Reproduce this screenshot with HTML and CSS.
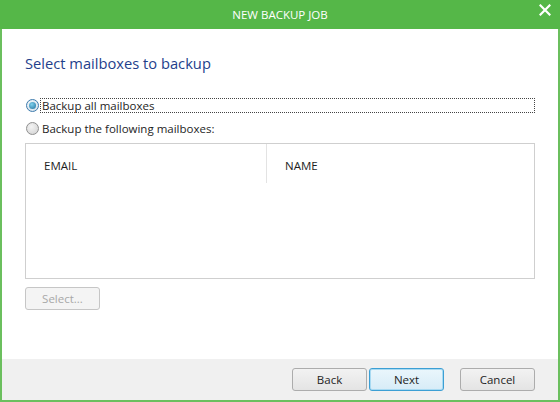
FILE: index.html
```html
<!DOCTYPE html>
<html>
<head>
<meta charset="utf-8">
<link rel="stylesheet" href="styles.css">
</head>
<body>
<div class="window">
  <div class="titlebar">
    <span class="title">NEW BACKUP JOB</span>
    <span class="close">
      <svg width="12" height="12" viewBox="0 0 12 12"><path d="M1.5 1.5 L10.5 10.5 M10.5 1.5 L1.5 10.5" stroke="#fff" stroke-width="2.2" stroke-linecap="square"/></svg>
    </span>
  </div>
  <div class="content">
    <h1 class="heading">Select mailboxes to backup</h1>
    <div class="options">
      <label class="option">
        <span class="radio checked"><span class="dot"></span></span>
        <span class="label focus">Backup all mailboxes</span>
      </label>
      <label class="option">
        <span class="radio"></span>
        <span class="label">Backup the following mailboxes:</span>
      </label>
    </div>
    <div class="grid">
      <div class="grid-head">
        <div class="col col-email">EMAIL</div>
        <div class="col col-name">NAME</div>
      </div>
    </div>
    <div class="select-row">
      <button class="btn disabled">Select...</button>
    </div>
  </div>
  <div class="footer">
    <button class="btn">Back</button>
    <button class="btn default">Next</button>
    <button class="btn cancel">Cancel</button>
  </div>
</div>
</body>
</html>
```

FILE: styles.css
```css
html, body {
  margin: 0;
  padding: 0;
  width: 560px;
  height: 402px;
  overflow: hidden;
  background: #fff;
}
body {
  font-family: "Open Sans", "Noto Sans", sans-serif;
  font-size: 11.5px;
  color: #1e1e1e;
}
.window {
  width: 560px;
  height: 402px;
  box-sizing: border-box;
  border-left: 2px solid #6bbf5e;
  border-right: 2px solid #6bbf5e;
  border-bottom: 2px solid #6bbf5e;
  display: flex;
  flex-direction: column;
}
.titlebar {
  height: 29px;
  margin: 0 -2px;
  background: #55b748;
  color: #fff;
  display: flex;
  align-items: center;
  justify-content: center;
  position: relative;
  flex: none;
}
.title {
  font-size: 11.5px;
}
.close {
  position: absolute;
  right: 9px;
  top: 4px;
  width: 12px;
  height: 12px;
}
.content {
  flex: 1;
  background: #fff;
  padding: 0 23px;
}
.heading {
  margin: 24px 0 0 0;
  font-size: 14.7px;
  font-weight: normal;
  line-height: 20px;
  color: #1f3f8c;
}
.options {
  margin-top: 23px;
  display: flex;
  flex-direction: column;
  gap: 5px;
}
.option {
  display: flex;
  align-items: center;
  height: 18px;
}
.radio {
  width: 11px;
  height: 11px;
  border-radius: 50%;
  border: 1px solid #8f8f8f;
  background: radial-gradient(circle at 40% 35%, #f4f4f4, #d0d0d0);
  margin-left: 1px;
  margin-right: 1px;
  display: flex;
  align-items: center;
  justify-content: center;
  flex: none;
}
.radio.checked {
  border-color: #3d7bad;
  background: radial-gradient(circle at 40% 35%, #f4f8fb, #cfdde8);
}
.dot {
  width: 7px;
  height: 7px;
  border-radius: 50%;
  background: radial-gradient(circle at 40% 35%, #7fd0ec, #1f6f9c);
}
.label {
  line-height: 13px;
  padding: 0 1px;
}
.label.focus {
  flex: 1;
  border: 1px dotted #444;
}
.option + .option .label {
  margin-left: 1px;
}
.grid {
  margin-top: 6px;
  height: 134px;
  border: 1px solid #cfcfcf;
  background: #fff;
}
.grid-head {
  display: flex;
  height: 39px;
}
.col {
  padding-top: 15px;
  padding-left: 18px;
  line-height: 14px;
}
.col-email {
  width: 222px;
  border-right: 1px solid #e3e3e3;
}
.col-name {
  flex: 1;
}
.select-row {
  margin-top: 8px;
  display: flex;
}
.btn {
  font-family: "Open Sans", "Noto Sans", sans-serif;
  font-size: 11.5px;
  width: 75px;
  height: 23px;
  padding: 0;
  border: 1px solid #acacac;
  border-radius: 3px;
  background: linear-gradient(#f2f2f2, #e4e4e4);
  color: #1e1e1e;
}
.btn.disabled {
  color: #a8a8a8;
  border-color: #c6c6c6;
  background: #f4f4f4;
}
.btn.default {
  border-color: #3c9fd4;
  background: linear-gradient(#eaf6fc, #d7ecf7);
  box-shadow: inset 0 0 0 1px #a8daf2;
}
.footer {
  height: 41px;
  flex: none;
  background: #f0f0f0;
  display: flex;
  align-items: center;
  justify-content: flex-end;
  padding-right: 23px;
  gap: 2px;
}
.btn.cancel {
  margin-left: 14px;
}
```
